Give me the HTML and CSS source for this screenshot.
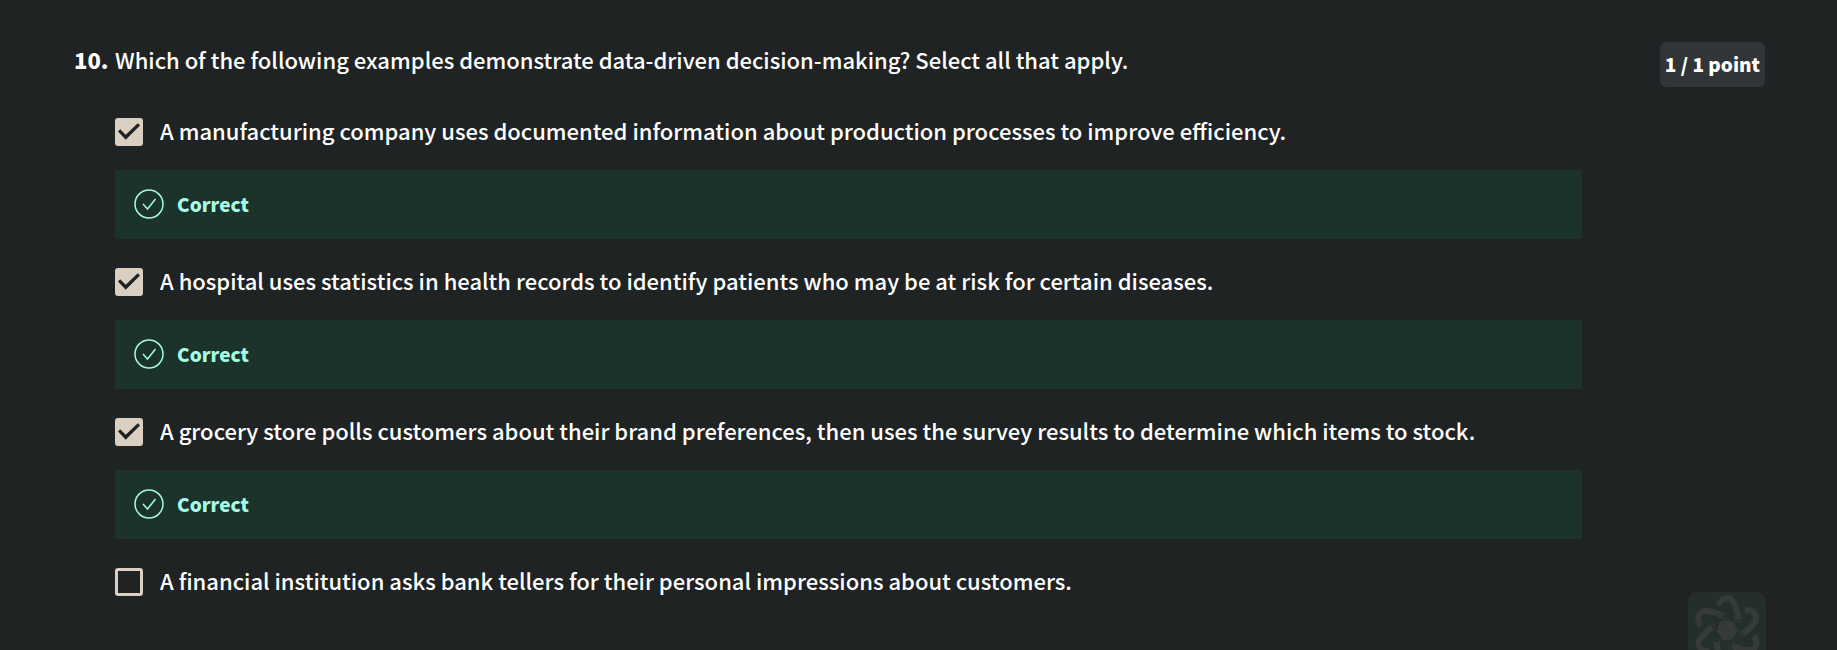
FILE: index.html
```html
<!DOCTYPE html>
<html lang="en">
<head>
<meta charset="utf-8">
<meta name="viewport" content="width=device-width, initial-scale=1">
<title>Quiz question 10</title>
<link rel="stylesheet" href="styles.css">
</head>
<body>
<main class="question">
  <span class="number">10.</span>
  <fieldset class="body">
    <legend class="prompt">Which of the following examples demonstrate data-driven decision-making? Select all that apply.</legend>
    <label class="option"><input class="box" type="checkbox" checked><span class="answer">A manufacturing company uses documented information about production processes to improve efficiency.</span></label>
    <div class="feedback"><svg class="tick" viewBox="0 0 30 30" aria-hidden="true"><circle cx="15" cy="15" r="14"/><path d="M9 15l4.500 5 8-10"/></svg>Correct</div>
    <label class="option"><input class="box" type="checkbox" checked><span class="answer">A hospital uses statistics in health records to identify patients who may be at risk for certain diseases.</span></label>
    <div class="feedback"><svg class="tick" viewBox="0 0 30 30" aria-hidden="true"><circle cx="15" cy="15" r="14"/><path d="M9 15l4.500 5 8-10"/></svg>Correct</div>
    <label class="option"><input class="box" type="checkbox" checked><span class="answer">A grocery store polls customers about their brand preferences, then uses the survey results to determine which items to stock.</span></label>
    <div class="feedback"><svg class="tick" viewBox="0 0 30 30" aria-hidden="true"><circle cx="15" cy="15" r="14"/><path d="M9 15l4.500 5 8-10"/></svg>Correct</div>
    <label class="option"><input class="box" type="checkbox"><span class="answer">A financial institution asks bank tellers for their personal impressions about customers.</span></label>
  </fieldset>
  <div class="points">1 / 1 point</div>
</main>
<button class="assistant" type="button" aria-label="Open assistant">
  <svg class="assistant-icon" viewBox="0 0 234 234" aria-hidden="true">
    <defs><g id="arm"><path d="M91 40C103 14 128 12 139 35C146 50 148 64 150 82"/><circle cx="150" cy="82" r="1"/></g></defs>
    <path class="core" d="M110 84l27 6 12 26-15 25-26 6-21-28 8-28z"/>
    <g class="arms">
      <use href="#arm"/><use href="#arm" transform="rotate(60 118 116)"/><use href="#arm" transform="rotate(120 118 116)"/><use href="#arm" transform="rotate(180 118 116)"/><use href="#arm" transform="rotate(240 118 116)"/><use href="#arm" transform="rotate(300 118 116)"/>
    </g>
  </svg>
</button>
</body>
</html>
```
FILE: styles.css
```css
* { box-sizing: border-box; }

body {
  margin: 0;
  background: #1f2324;
  color: #fff;
  font-family: "Noto Sans CJK JP", "Noto Sans", sans-serif;
  font-size: 22px;
  font-weight: 500;
  line-height: 34px;
}

.question {
  display: grid;
  grid-template-columns: 41px minmax(0, 1fr) auto;
  align-items: start;
  padding: 42px 72px 24px 74px;
}

.number { font-weight: 900; }

.body {
  min-width: 0;
  margin: 0 78px 0 0;
  padding: 0;
  border: 0;
}

.prompt { padding: 0; }

.option {
  display: flex;
  align-items: center;
  gap: 17px;
  padding: 24px 0 19px;
}

.prompt + .option { padding-top: 37px; }

.answer { padding-bottom: 4px; }

.box {
  flex: none;
  appearance: none;
  display: grid;
  place-items: center;
  width: 28px;
  height: 28px;
  margin: 0;
  border: 3px solid #dacfc0;
  border-radius: 3px;
}

.box:checked { background: #dacfc0; }

.box:checked::before {
  content: "";
  width: 22px;
  height: 22px;
  background: #1f2324;
  clip-path: polygon(0 48%, 10% 38%, 35% 63%, 90% 10%, 100% 20%, 35% 85%);
}

.feedback {
  display: flex;
  align-items: center;
  gap: 13px;
  min-height: 69px;
  padding: 0 19px 1px;
  background: #1b332b;
  color: #a7fbe5;
  font-size: 19px;
  font-weight: 900;
}

.tick {
  width: 30px;
  height: 30px;
  fill: none;
  stroke: currentColor;
  stroke-width: 1.500;
}

.points {
  padding: 5px 5px 6px;
  border-radius: 6px;
  background: #313537;
  font-size: 19px;
  font-weight: 900;
}

.assistant {
  position: fixed;
  right: 71px;
  bottom: -20px;
  width: 78px;
  height: 78px;
  padding: 0;
  border: 0;
  border-radius: 9px;
  background: #242e2b;
}

.assistant-icon { display: block; width: 100%; }
.core { fill: #363a3b; }
.arms { fill: none; stroke: #363a3b; stroke-width: 18; }
```
